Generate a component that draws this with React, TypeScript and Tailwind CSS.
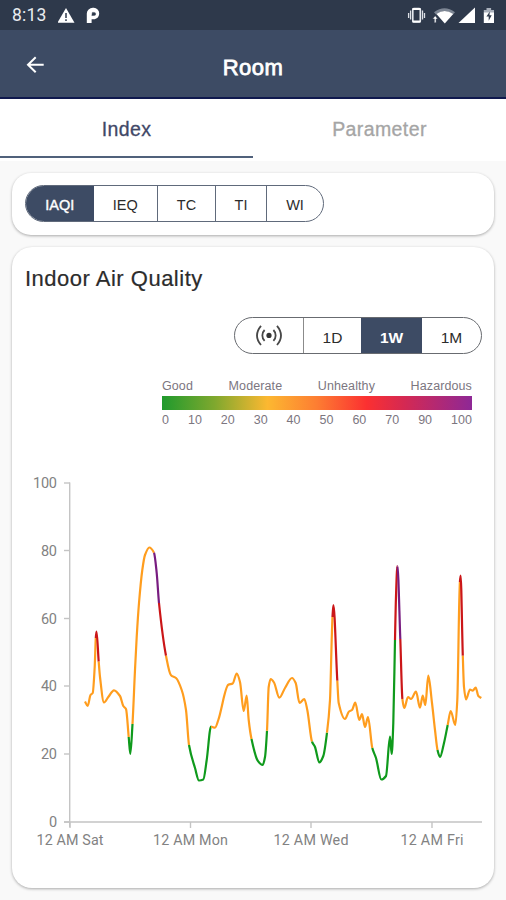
import React from "react";

type Tone = "o" | "g" | "r" | "p";
type Pt = [number, number, Tone?];

const tones: Record<Tone, string> = { o: "#ff9d1e", g: "#0f9a1c", r: "#cb1618", p: "#781c80" };

// A tone on a point applies to every segment that follows it.
const points: Pt[] = [
  [85, 701.5, "o"], [87.7, 706], [90.5, 695], [92.7, 693], [94.7, 667], [95.8, 638, "r"], [96.5, 631.7], [98.7, 661.7, "o"],
  [100, 677], [104, 702.5], [108.3, 697], [114, 690.3], [120, 696], [123.3, 706], [126, 709], [128.7, 737, "g"],
  [130.3, 754], [132.5, 724, "o"], [135, 670], [136.7, 637], [139, 603], [142.3, 570], [145, 555], [149.3, 547.5],
  [154, 552.7, "p"], [156.7, 573], [159, 603, "r"], [166, 655.7, "o"], [171, 675.3], [176, 678], [181.7, 690], [186, 710],
  [189, 745, "g"], [195, 768], [199, 780.5], [203.3, 779.5], [206.7, 760], [211, 726.7, "o"], [215, 727.7], [218.3, 720],
  [228.3, 684.8], [232.7, 683.5], [236.7, 673.5], [240, 682], [243.7, 711], [246.7, 695.7], [248.7, 720], [251.5, 739, "g"],
  [257.7, 760.7], [262.7, 765], [265, 757], [267, 730.7, "o"], [268.7, 687], [270.7, 679], [274, 682.5], [279.3, 697.7],
  [285, 688], [292, 678], [295.7, 683], [299.5, 703], [304.3, 699], [307.3, 710], [312, 741.7, "g"], [315, 747], [319.3, 762.5],
  [323.3, 756], [327, 732.7, "o"], [330, 700], [331.7, 640], [332.5, 617, "r"], [333.4, 605], [337.3, 680.7, "o"], [338.7, 703],
  [345, 719], [349, 711.5], [352, 710], [355.3, 702.7], [359.3, 720], [362, 714], [365, 727], [368, 717], [372.3, 748, "g"],
  [376, 758], [381.3, 779.5], [386, 776], [390, 736.7], [391.7, 754], [393.3, 723], [395, 640, "r"], [395.8, 603],
  [397.4, 566, "p"], [400.3, 639, "r"], [402.4, 699, "o"], [404.3, 708], [408, 697], [411, 699], [416, 691.7], [420, 707.7],
  [422.7, 695.7], [425.3, 705], [428.3, 675.7], [432, 703], [435, 730], [437.5, 750, "g"], [440, 757], [444, 743],
  [447.7, 725, "o"], [450.7, 711], [455.3, 725], [457.3, 700], [459.3, 600], [459.9, 582, "r"], [460.6, 575.5],
  [462.8, 655.7, "o"], [464, 687], [466, 699.5], [470, 689.5], [472.7, 690.7], [475.7, 687.5], [478.3, 696], [481.3, 698],
];

// Monotone cubic interpolation, split wherever the tone changes.
function buildRuns() {
  const slope = (i: number) => (points[i + 1][1] - points[i][1]) / (points[i + 1][0] - points[i][0]);
  const tangent = points.map((_, i) => {
    if (i === 0) return slope(0);
    if (i === points.length - 1) return slope(i - 1);
    const a = slope(i - 1);
    const b = slope(i);
    return a * b <= 0 ? 0 : (2 * a * b) / (a + b);
  });
  const runs: { color: string; d: string }[] = [];
  for (let i = 0; i < points.length - 1; i++) {
    const [x0, y0, tone] = points[i];
    const [x1, y1] = points[i + 1];
    if (tone) runs.push({ color: tones[tone], d: `M${x0} ${y0}` });
    const h = (x1 - x0) / 3;
    runs[runs.length - 1].d += `C${x0 + h} ${y0 + h * tangent[i]} ${x1 - h} ${y1 - h * tangent[i + 1]} ${x1} ${y1}`;
  }
  return runs;
}

const yTicks = [
  { label: "100", y: 483, w: 24 },
  { label: "80", y: 550.5, w: 16 },
  { label: "60", y: 618.5, w: 16 },
  { label: "40", y: 686, w: 16 },
  { label: "20", y: 754, w: 16 },
  { label: "0", y: 822, w: 8 },
];
const xTicks = [
  { label: "12 AM Sat", x: 70, w: 67 },
  { label: "12 AM Mon", x: 190.5, w: 75 },
  { label: "12 AM Wed", x: 311, w: 75 },
  { label: "12 AM Fri", x: 432, w: 63 },
];

function Chart() {
  return (
    <svg className="block h-[388px] w-full" viewBox="12 470 482 388" fontFamily='Roboto, "Liberation Sans", sans-serif' fontSize="14.5" fill="#828282">
      <g stroke="#c4c4c4" strokeWidth="1.4">
        <path d="M69.7 482.5V827M64 822H482" fill="none" />
        {yTicks.map((t) => <path key={t.label} d={`M64 ${t.y}H70`} />)}
        {xTicks.map((t) => <path key={t.label} d={`M${t.x} 822V828`} />)}
      </g>
      {yTicks.map((t) => (
        <text key={t.label} x={57 - t.w} y={t.y + 5} textLength={t.w}>{t.label}</text>
      ))}
      {xTicks.map((t) => (
        <text key={t.label} x={t.x - t.w / 2} y="845.3" textLength={t.w} fontSize="14.3">{t.label}</text>
      ))}
      <g fill="none" strokeWidth="2.2" strokeLinejoin="round">
        {buildRuns().map((r, i) => <path key={i} d={r.d} stroke={r.color} />)}
      </g>
    </svg>
  );
}

function StatusBar() {
  return (
    <div className="flex h-[30px] items-center bg-[#2e394b] pr-[11px] pl-3 text-white">
      <span className="w-[46px] pt-px font-[Roboto,sans-serif] text-[17.5px] leading-[29px] tracking-[0.2px] text-[#e9ecf0]">8:13</span>
      <svg className="h-[30px] w-[44px]" viewBox="58 0 44 30">
        <path d="M66 8L74.5 22.7H57.5Z" fill="#fff" />
        <path d="M66 13v5M66 19.3v1.6" stroke="#2e394b" strokeWidth="1.5" />
        <path d="M86.8 23V13.6a6 6 0 0 1 6-5.8h1a5.4 5.4 0 0 1 5.4 5.4c0 3.8-2.4 6-5.6 6H91.6V23Z" fill="#fff" />
        <path d="M91.8 15.6l.5-3.2h1.9a1.5 1.5 0 0 1 0 3Z" fill="#2e394b" stroke="#2e394b" strokeWidth=".4" />
      </svg>
      <svg className="ml-auto h-[30px] w-[90px]" viewBox="405 0 90 30" fill="none">
        <rect x="412.8" y="8.5" width="7.5" height="13.5" rx="1" stroke="#e5e9ee" strokeWidth="1.6" />
        <path d="M412.5 9h8M412.5 21.5h8" stroke="#fff" strokeWidth="2" />
        <path d="M410.6 10.5v9M422.5 10.5v9M408.6 13v5M424.5 13v5" stroke="#dde1e7" strokeWidth="1.3" />
        <path d="M434 12.2Q444.5 4.2 455 12.2L453 14.6Q444.5 7.5 436 14.6Z" fill="#7d8694" />
        <path d="M436.4 14Q444.5 8 453.2 14L444.8 23.6Z" fill="#fff" />
        <path d="M435.2 15.7l2.6 3.2h-1.7v3.8h-1.8v-3.8h-1.7Z" fill="#fff" stroke="#2e394b" strokeWidth=".5" />
        <path d="M475 7.5V23H458.5Z" fill="#fff" />
        <path d="M486.5 8h4.6v2h2.9v3h-10.2v-3h2.7Z" fill="#a9b0bb" />
        <path d="M483.8 12.5H494V23h-10.2Z" fill="#fff" />
        <path d="M489.8 11.5l-3.4 5h2.3v4.2l3-5.4h-2.2Z" fill="#2e394b" />
      </svg>
    </div>
  );
}

const legendNumbers = ["0", "10", "20", "30", "40", "50", "60", "70", "90", "100"];

export default function App() {
  return (
    <div className="h-[900px] w-[506px] overflow-hidden bg-[#f9f9f9] font-['Liberation_Sans',Arial,sans-serif] text-[#2c2c2c]">
      <StatusBar />
      <header className="grid h-[69px] grid-cols-[70px_1fr_70px] border-b-2 border-[#10194e] bg-[#3d4b64] text-white">
        <svg className="h-[67px] w-[70px]" viewBox="0 30 70 67" fill="none" stroke="#fff" strokeWidth="2">
          <path d="M43.7 64.8H28M35.7 57.3L28 64.8l7.7 7.5" />
        </svg>
        <h1 className="pt-[4px] text-center text-[22px] leading-[67px] font-normal tracking-[0.5px] [-webkit-text-stroke:0.8px_white]">Room</h1>
      </header>
      <nav className="grid h-[62px] grid-cols-2 bg-white text-center text-[19.5px] leading-[61px] tracking-[0.4px]">
        <div className="h-[59px] border-b-2 border-[#50617b] text-[#414867] [-webkit-text-stroke:0.3px_#414867]">Index</div>
        <div className="text-[#a5a5a5] [-webkit-text-stroke:0.3px_#a5a5a5]">Parameter</div>
      </nav>

      <main className="px-3 pt-3">
        <section className="h-[62px] rounded-[19px] bg-white px-[13px] pt-3 shadow-[0_1px_3px_rgba(0,0,0,0.32)]">
          <div className="flex h-[37px] w-[299px] overflow-hidden rounded-full border border-[#606a7b] text-center text-[14.5px] leading-[39px]">
            <div className="w-[67.5px] bg-[#3d4b64] text-white [-webkit-text-stroke:0.4px_white]">IAQI</div>
            <div className="w-[64.5px] border-r border-[#606a7b]">IEQ</div>
            <div className="w-[58px] border-r border-[#606a7b]">TC</div>
            <div className="w-[51px] border-r border-[#606a7b]">TI</div>
            <div className="flex-1">WI</div>
          </div>
        </section>

        <section className="mt-3 h-[641px] rounded-[20px] bg-white shadow-[0_1px_3px_rgba(0,0,0,0.32)]">
          <h2 className="h-[70px] pt-[19px] pl-[13px] text-[22px] leading-[26px] tracking-[0.5px] [-webkit-text-stroke:0.2px_#2c2c2c]">Indoor Air Quality</h2>
          <div className="ml-[222px] flex h-[37px] w-[248px] overflow-hidden rounded-full border border-[#686b70] text-center text-[15.5px] leading-[39px]">
            <div className="flex w-[69px] items-center justify-center border-r border-[#8b8b8b]">
              <svg className="h-[24px] w-[28px]" viewBox="0 0 28 24" fill="none" stroke="#484848" strokeWidth="1.8">
                <circle cx="14" cy="11.4" r="2.6" fill="#333" stroke="none" />
                <path d="M9.6 6a7.6 7.6 0 0 0 0 10.8M18.4 6a7.6 7.6 0 0 1 0 10.8M6 1.8Q-2 11.4 6 21M22 1.8Q30 11.4 22 21" />
              </svg>
            </div>
            <div className="w-[57px]">1D</div>
            <div className="w-[61px] bg-[#3d4b64] font-bold text-white">1W</div>
            <div className="flex-1">1M</div>
          </div>

          <div className="mt-[24px] ml-[150px] h-[92px] w-[310px] text-[12.5px] text-[#7c767f]">
            <div className="flex h-[18px] justify-between leading-[17px] tracking-[0.1px]">
              <span>Good</span><span>Moderate</span><span>Unhealthy</span><span>Hazardous</span>
            </div>
            <div className="h-[14px] bg-[linear-gradient(90deg,#1f9a2d_0%,#7fa82e_17%,#fcb831_34%,#fd7d32_50%,#fb3031_66%,#d52952_78%,#8e2896_100%)]" />
            <div className="flex justify-between pt-px leading-[19px]">
              {legendNumbers.map((n) => <span key={n}>{n}</span>)}
            </div>
          </div>
          <Chart />
        </section>
      </main>
    </div>
  );
}
